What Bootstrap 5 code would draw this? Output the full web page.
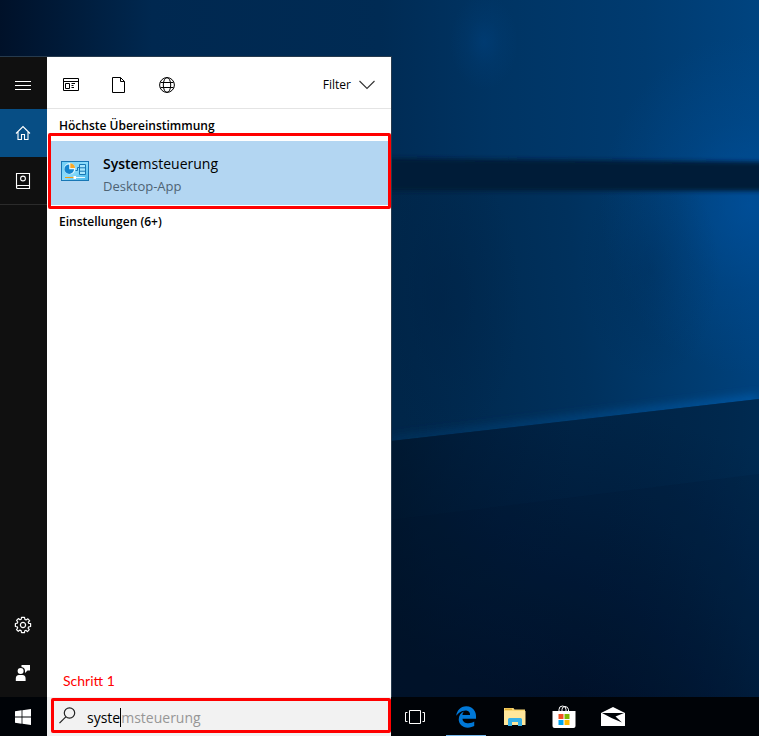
<!DOCTYPE html>
<html lang="de">
<head>
<meta charset="utf-8">
<meta name="viewport" content="width=device-width, initial-scale=1">
<title>Suche</title>
<link rel="stylesheet" href="https://cdn.jsdelivr.net/npm/bootstrap@5.3.0/dist/css/bootstrap.min.css">
<style>
  body { font-family: "Open Sans", "Noto Sans", sans-serif; font-size: 14px; line-height: 20px; background: #001b38; color: #000; }
  svg { display: block; flex: none; }
  button { font: inherit; color: inherit; border: 0; background: none; padding: 0; }
  .wallpaper { z-index: -1; }
  .start-area { padding-top: 56px; }
  .start-menu { width: 392px; max-width: 100%; border-top: 1px solid #263a4d; border-right: 1px solid #263a4d; }
  .rail { width: 47px; background: #101010; color: #fff; }
  .rail button { height: 48px; padding-right: 1px; }
  .rail .rail-menu { height: 52px; padding-top: 4px; }
  .rail .rail-home { background: #074e85; }
  .rail .rail-notes { border-bottom: 1px solid #2b2b2b; }
  .filter-bar { height: 52px; border-bottom: 1px solid #e4e4e4; padding: 4px 16px 0 12px; }
  .filter-kind { width: 24px; height: 24px; }
  .small-text { font-size: 12px; }
  .group-title { font-size: 12px; line-height: 16px; font-weight: 600; height: 24px; margin: 0; padding: 9px 12px 0; }
  .group-title-next { padding-top: 5px; }
  .step-frame { border: 3px solid #f00; border-radius: 2px; }
  .result-frame { margin-left: 1px; padding: 5px 0 1px; }
  .result-item { height: 64px; background: #b3d6f2; padding: 0 10px 4px; gap: 14px; }
  .result-text { gap: 2px; padding-top: 8px; }
  .result-item small { font-size: 13px; color: #4e6374; }
  .step-label { color: #f00; font-family: Lato, "Open Sans", sans-serif; font-size: 14px; padding: 0 16px 6px; }
  .taskbar { background: #000307; height: 39px; }
  .search-area { width: 344px; background: #f2f2f2; padding: 1px 0 3px 4px; }
  .start-button { width: 47px; padding-right: 1px; }
  .search-box { padding: 0 5px; gap: 11px; }
  .search-box input { border: 0; padding: 0; background: transparent; outline: 0; color: #000; line-height: 20px; }
  .typed { color: transparent; border-right: 1px solid #000; }
  .completion { color: #969696; pointer-events: none; white-space: nowrap; line-height: 20px; }
  .task { width: 48px; margin-right: 1px; }
  .task-view { width: 50px; padding-right: 2px; }
  .task-active { background: linear-gradient(#76b9ed, #76b9ed) center bottom / 40px 1px no-repeat; }
</style>
</head>
<body class="min-vh-100 d-flex flex-column position-relative">
<svg class="wallpaper position-absolute top-0 start-0 w-100 h-100" viewBox="0 0 759 736" preserveAspectRatio="none" aria-hidden="true">
  <defs>
    <linearGradient id="skyTop"><stop offset="0" stop-color="#001129"/><stop offset=".08" stop-color="#001a38"/><stop offset=".2" stop-color="#002850"/><stop offset=".5" stop-color="#002b54"/><stop offset=".65" stop-color="#003463"/><stop offset=".85" stop-color="#003b70"/><stop offset="1" stop-color="#004480"/></linearGradient>
    <linearGradient id="skyMid" gradientUnits="userSpaceOnUse" x1="391" y1="300" x2="759" y2="260"><stop offset="0" stop-color="#002649"/><stop offset=".5" stop-color="#00315d"/><stop offset=".8" stop-color="#003c71"/><stop offset="1" stop-color="#004380"/></linearGradient>
    <linearGradient id="floor" gradientUnits="userSpaceOnUse" x1="620" y1="410" x2="540" y2="700"><stop offset="0" stop-color="#002548"/><stop offset=".35" stop-color="#001e3e"/><stop offset="1" stop-color="#001129"/></linearGradient>
    <linearGradient id="floorLeft" gradientUnits="userSpaceOnUse" x1="391" y1="0" x2="759" y2="0"><stop offset="0" stop-color="#001428" stop-opacity=".6"/><stop offset=".5" stop-color="#001a38" stop-opacity="0"/><stop offset="1" stop-color="#003a6c" stop-opacity=".25"/></linearGradient>
    <linearGradient id="edgeLight" gradientUnits="userSpaceOnUse" x1="391" y1="0" x2="759" y2="0"><stop offset="0" stop-color="#003866" stop-opacity=".6"/><stop offset="1" stop-color="#0059a8"/></linearGradient>
    <radialGradient id="glow"><stop offset="0" stop-color="#0052a0" stop-opacity=".7"/><stop offset=".5" stop-color="#0052a0" stop-opacity=".25"/><stop offset="1" stop-color="#0052a0" stop-opacity="0"/></radialGradient>
    <radialGradient id="shade"><stop offset="0" stop-color="#002347" stop-opacity=".6"/><stop offset=".5" stop-color="#002347" stop-opacity=".25"/><stop offset="1" stop-color="#002347" stop-opacity="0"/></radialGradient>
    <filter id="soft" x="-10%" y="-50%" width="120%" height="200%"><feGaussianBlur stdDeviation="2"/></filter>
    <filter id="softer" x="-10%" y="-200%" width="120%" height="500%"><feGaussianBlur stdDeviation="5"/></filter>
    <clipPath id="aboveFloor"><path d="M0 0H759V399L391 441H0Z"/></clipPath>
  </defs>
  <rect width="759" height="736" fill="url(#skyTop)"/>
  <path d="M0 180H759V420L391 450H0Z" fill="url(#skyMid)"/>
  <ellipse cx="484" cy="42" rx="34" ry="48" fill="url(#glow)" opacity=".35"/>
  <ellipse cx="750" cy="205" rx="150" ry="170" fill="url(#glow)"/>
  <ellipse cx="440" cy="300" rx="80" ry="150" fill="url(#shade)"/>
  <ellipse cx="650" cy="270" rx="70" ry="110" fill="url(#shade)" opacity=".4"/>
  <g clip-path="url(#aboveFloor)"><path d="M391 441L759 399" stroke="url(#edgeLight)" stroke-width="9" filter="url(#softer)"/></g>
  <path d="M380 158L770 162V191H380Z" fill="#001a38" filter="url(#soft)"/>
  <path d="M0 441H391L759 399V736H0Z" fill="url(#floor)"/>
  <path d="M0 441H391L759 399V736H0Z" fill="url(#floorLeft)"/>
  <path d="M391 520L759 474V736H391Z" fill="#001129" opacity=".12"/>
</svg>

<main class="start-area flex-grow-1 d-flex">
  <div class="start-menu d-flex">
    <nav class="rail d-flex flex-column" aria-label="Startmenü">
      <button class="rail-menu d-flex align-items-center justify-content-center" aria-label="Menü">
        <svg width="16" height="11" viewBox="0 0 16 11" stroke="#fff"><path d="M0 1.5H16M0 5.5H16M0 9.5H16"/></svg>
      </button>
      <button class="rail-home d-flex align-items-center justify-content-center" aria-label="Startseite">
        <svg width="16" height="16" viewBox="0 0 16 16" fill="none" stroke="#fff" stroke-width="1.1"><path d="M1 8.5L8 1.5L15 8.5M3 7V14.5H6.5V9.5H9.5V14.5H13V7"/></svg>
      </button>
      <button class="rail-notes d-flex align-items-center justify-content-center" aria-label="Notizbuch">
        <svg width="16" height="18" viewBox="0 0 16 18" fill="none" stroke="#fff" stroke-width="1.1"><path d="M14.5 13.5V1.5H1.5V15.5Q1.5 16.5 2.5 16.5H14.5V13.5H3Q1.5 13.5 1.5 15"/><circle cx="8" cy="6.5" r="2.4"/></svg>
      </button>
      <button class="mt-auto d-flex align-items-center justify-content-center" aria-label="Einstellungen">
        <svg width="18" height="18" viewBox="-9 -9 18 18" fill="none" stroke="#fff" stroke-width="1.2" stroke-linejoin="round"><path d="M-1.5-7.6H1.5L1.9-5.6L3.1-5L4.9-6.2L6.7-4.2L5.2-2.9L5.7-1.7L7.6-1.5V1.5L5.6 1.9L5.1 3.1L6.3 4.7L4.4 6.6L2.9 5.3L1.8 5.7L1.5 7.6H-1.5L-1.9 5.6L-3.1 5.1L-4.7 6.3L-6.5 4.5L-5.3 3L-5.7 1.8L-7.6 1.5V-1.5L-5.7-1.8L-5.2-3L-6.4-4.6L-4.6-6.4L-3-5.2L-1.8-5.7Z"/><circle r="2.6"/></svg>
      </button>
      <button class="d-flex align-items-center justify-content-center" aria-label="Feedback">
        <svg width="16" height="18" viewBox="0 0 16 18" fill="#fff"><path d="M6.5 1H15V6.5H12.5L10 9V7A4 4 0 0 0 6.5 3Z"/><circle cx="5.6" cy="7" r="3"/><path d="M.8 17V14.5Q.8 11.2 4 11H7.4Q10.6 11.2 10.6 14.5V17Z"/></svg>
      </button>
    </nav>
    <section class="flex-grow-1 d-flex flex-column bg-white" aria-label="Suchergebnisse">
      <div class="filter-bar d-flex align-items-center justify-content-between">
        <div class="d-flex gap-4">
          <button class="filter-kind d-flex align-items-center justify-content-center" aria-label="Apps">
            <svg width="16" height="14" viewBox="0 0 16 14" fill="none" stroke="#000"><path d="M.5 .5H15.5V12.5H.5ZM.5 3.5H15.5M2.5 5.5H6.5V10.5H2.5ZM8.5 5.5H12M8.5 7.5H10.5M8.5 9.5H11"/></svg>
          </button>
          <button class="filter-kind d-flex align-items-center justify-content-center" aria-label="Dokumente">
            <svg width="14" height="16" viewBox="0 0 14 16" fill="none" stroke="#000"><path d="M.5 .5H8.5L12.5 4.5V15.5H.5ZM8.5 .5V4.5H12.5"/></svg>
          </button>
          <button class="filter-kind d-flex align-items-center justify-content-center" aria-label="Web">
            <svg width="16" height="16" viewBox="0 0 16 16" fill="none" stroke="#000"><circle cx="8" cy="8" r="7.4"/><ellipse cx="8" cy="8" rx="3.7" ry="7.4"/><path d="M1.5 5.5H14.5M1.5 10.5H14.5"/></svg>
          </button>
        </div>
        <button class="small-text d-flex align-items-center"><span class="me-1 pe-1">Filter</span>
          <svg width="16" height="10" viewBox="0 0 16 10" fill="none" stroke="#333" stroke-width="1.1"><path d="M.5 1L8 8.5L15.5 1"/></svg>
        </button>
      </div>
      <h2 class="group-title">Höchste Übereinstimmung</h2>
      <div class="step-frame result-frame">
        <button class="result-item w-100 d-flex align-items-center text-start">
          <svg width="28" height="20" viewBox="0 0 28 20">
            <defs><linearGradient id="panelBlue" x2="1" y2="1"><stop offset="0" stop-color="#6fcdf5"/><stop offset=".5" stop-color="#8ddcfa"/><stop offset="1" stop-color="#3fb4ea"/></linearGradient></defs>
            <rect x=".5" y=".5" width="27" height="19" fill="url(#panelBlue)" stroke="#1877b5"/>
            <circle cx="8.7" cy="7.7" r="5.6" fill="#e4f7ff"/><path d="M8.2 8.2V3.4A4.8 4.8 0 1 0 13 8.2Z" fill="#1485cf"/><path d="M9.3 7.1V2.3A4.8 4.8 0 0 1 14 7.1Z" fill="#f9a825"/>
            <path d="M14.5 9.5H16.5V6.5H19" fill="none" stroke="#1877b5"/><path d="M18.5 3.5H24.5V13.5H18.5ZM18.5 6.8H24.5M18.5 10.2H24.5" fill="#a8e6fc" stroke="#1877b5"/>
            <path d="M4 16.5H13" stroke="#f39c12"/><path d="M14 16.5H24" stroke="#eaf9ff"/><path d="M12.5 15H15V18H12.5Z" fill="#fff"/>
          </svg>
          <span class="result-text d-flex flex-column"><span><span class="fw-semibold">Syste</span>msteuerung</span><small>Desktop-App</small></span>
        </button>
      </div>
      <h2 class="group-title group-title-next">Einstellungen (6+)</h2>
      <p class="step-label mt-auto mb-0">Schritt 1</p>
    </section>
  </div>
</main>

<footer class="taskbar d-flex">
  <button class="start-button d-flex align-items-center justify-content-center" aria-label="Start">
    <svg width="16" height="16" viewBox="0 0 16 16" fill="#fff"><path d="M0 2.2L6.6 1.3V7.5H0ZM7.4 1.2L16 0V7.5H7.4ZM0 8.4H6.6V14.7L0 13.8ZM7.4 8.4H16V16L7.4 14.8Z"/></svg>
  </button>
  <div class="search-area d-flex">
    <label class="search-box step-frame flex-grow-1 d-flex align-items-center">
      <svg width="17" height="17" viewBox="0 0 17 17" fill="none" stroke="#222" stroke-width="1.2"><circle cx="10.5" cy="6" r="5.2"/><path d="M6.8 9.8L.5 16.2"/></svg>
      <span class="position-relative flex-grow-1 d-flex mt-1">
        <input class="w-100" type="text" value="syste" aria-label="Suche">
        <span class="completion position-absolute top-0 start-0" aria-hidden="true"><span class="typed">syste</span>msteuerung</span>
      </span>
    </label>
  </div>
  <button class="task task-view d-flex align-items-center justify-content-center" aria-label="Taskansicht">
    <svg width="20" height="16" viewBox="0 0 20 16" fill="none" stroke="#fff"><path d="M4.5 1.5H15.5V14.5H4.5ZM2.5 3.5H.5V12.5H2.5M17.5 3.5H19.5V12.5H17.5"/></svg>
  </button>
  <button class="task task-active d-flex align-items-center justify-content-center" aria-label="Microsoft Edge">
    <svg width="22" height="22" viewBox="8 0 490 512" fill="#0078d7"><path d="M25.714 228.163c.111-.162.23-.323.342-.485-.021.162-.045.323-.065.485h-.277zm460.572 15.508c0-44.032-7.754-84.465-28.801-122.405C416.498 47.879 343.912 8.001 258.893 8.001 118.962 7.724 40.617 113.214 26.056 227.679c42.429-61.312 117.073-121.376 220.375-124.966 0 0 109.666 0 99.419 104.957H169.997c6.369-37.386 18.554-58.986 34.339-78.926-75.048 34.893-121.85 96.096-120.742 188.315.83 71.448 50.124 144.836 120.743 171.976 83.357 31.847 192.776 7.2 240.132-21.324V363.307c-80.864 56.494-270.871 60.925-272.255-67.572h314.073v-52.064z"/></svg>
  </button>
  <button class="task d-flex align-items-center justify-content-center" aria-label="Explorer">
    <svg width="22" height="18" viewBox="0 0 22 18"><path d="M0 0H9.5L10.5 1.5H21V17H0Z" fill="#f8d775"/><path d="M1 1.2H8" stroke="#d59b18"/><path d="M0 3H21.5V17H0Z" fill="#ffe79b"/><path d="M4 18V11.5Q4 10 5.5 10H16.5Q18 10 18 11.5V18H14V14H8V18Z" fill="#35b1e8"/></svg>
  </button>
  <button class="task d-flex align-items-center justify-content-center" aria-label="Store">
    <svg width="24" height="24" viewBox="0 0 24 24"><path d="M7 7V4.5Q7 1 10.5 1T14 4.5V7M10 7V4.5Q10 1.5 13 1.5T16.5 4.5V7" fill="none" stroke="#fff"/><path d="M.5 6H23.5V21Q23.5 23 21.5 23H2.5Q.5 23 .5 21Z" fill="#fff"/><path d="M6.5 9H11.5V14H6.5Z" fill="#f25022"/><path d="M12.5 9H17.5V14H12.5Z" fill="#7fba00"/><path d="M6.5 15H11.5V20H6.5Z" fill="#00a4ef"/><path d="M12.5 15H17.5V20H12.5Z" fill="#ffb900"/></svg>
  </button>
  <button class="task d-flex align-items-center justify-content-center" aria-label="Mail">
    <svg width="24" height="20" viewBox="0 0 24 20"><path d="M0 6L12 0L24 6V19H0Z" fill="#fff"/><path d="M1 6H23L14.5 9.5L21 15.5L10.5 11Z" fill="#000307"/></svg>
  </button>
</footer>
<script src="https://cdn.jsdelivr.net/npm/bootstrap@5.3.0/dist/js/bootstrap.bundle.min.js"></script>
</body>
</html>
